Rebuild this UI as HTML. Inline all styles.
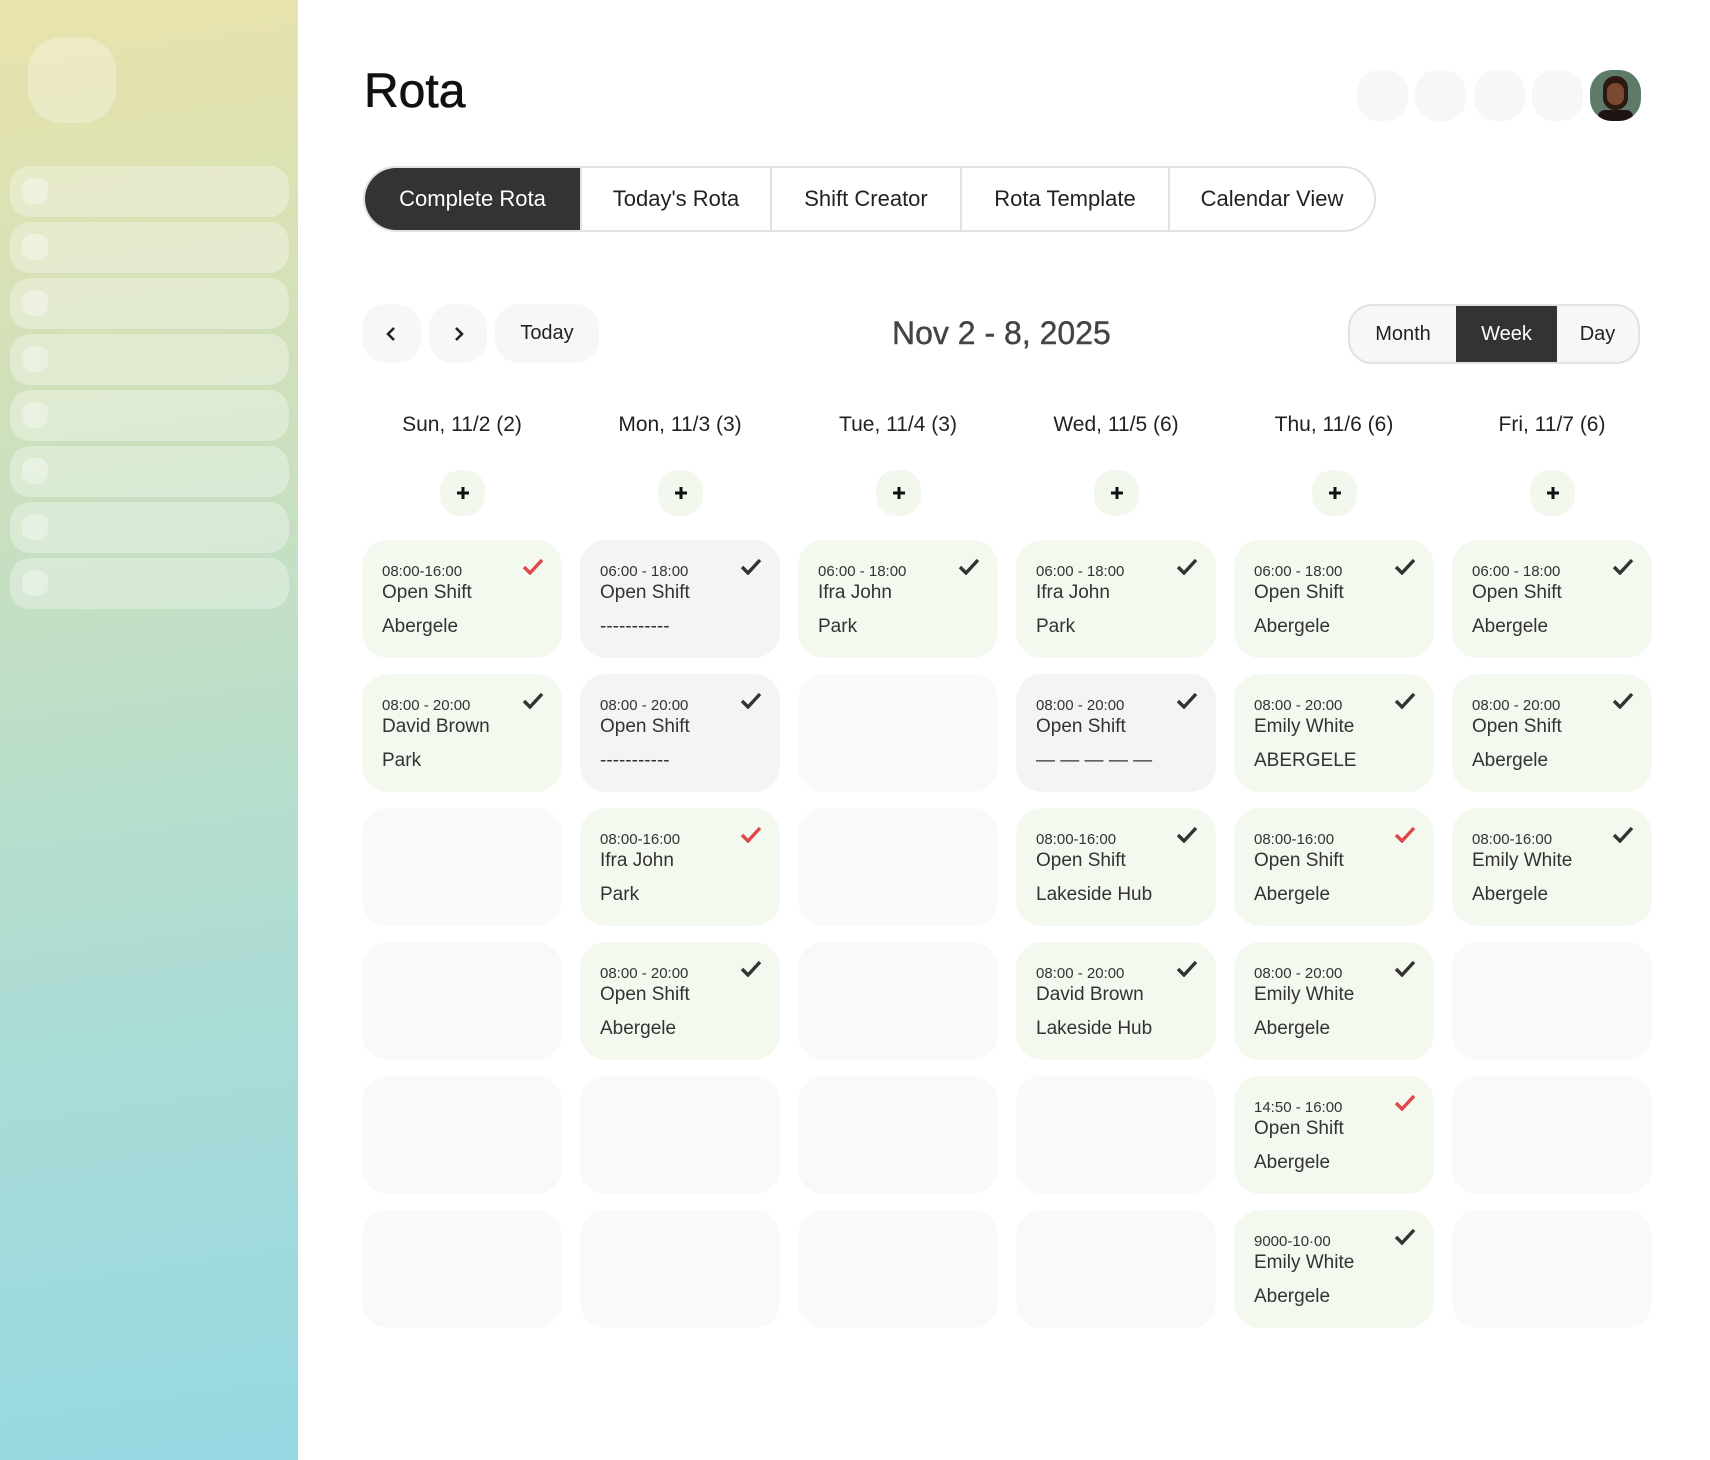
<!DOCTYPE html>
<html><head><meta charset="utf-8"><style>
*{margin:0;padding:0;box-sizing:border-box}
body{width:1710px;height:1460px;position:relative;background:#fff;font-family:"Liberation Sans",sans-serif;color:#222;overflow:hidden}
.sb{position:absolute;left:0;top:0;width:298px;height:1460px;background:linear-gradient(172deg,#e9e3ab 0%,#c4dfc3 40%,#aadcd6 70%,#95d8e2 100%)}
.logo{position:absolute;left:28px;top:37px;width:88px;height:86px;border-radius:34px;background:rgba(255,255,255,.28)}
.si{position:absolute;left:10px;width:279px;height:51px;border-radius:20px;background:rgba(255,255,255,.32)}
.si i{position:absolute;left:12px;top:12px;width:26px;height:26px;border-radius:10px;background:rgba(255,255,255,.35)}
h1{position:absolute;left:364px;top:64px;font-size:48px;font-weight:400;color:#111;-webkit-text-stroke:0.6px #111}
.tabs{position:absolute;left:363px;top:166px;height:66px;width:1013px;border:2px solid #e2e2e2;border-radius:33px;overflow:hidden;display:flex}
.tabs div{height:100%;display:flex;align-items:center;justify-content:center;font-size:22px;color:#222;border-right:2px solid #e2e2e2}
.tabs div:last-child{border-right:none}
.tabs .on{background:#333;color:#fff}
.nb{position:absolute;top:304px;height:59px;background:#f7f7f7;border-radius:24px;display:flex;align-items:center;justify-content:center;font-size:20px;color:#222}
.date{position:absolute;left:892px;top:315px;font-size:32px;color:#444;-webkit-text-stroke:0.4px #444}
.seg{position:absolute;left:1348px;top:304px;width:292px;height:60px;border:2px solid #e2e2e2;border-radius:24px;overflow:hidden;display:flex;background:#f7f7f7}
.seg div{display:flex;align-items:center;justify-content:center;font-size:20px;color:#222}
.seg .on{background:#333;color:#fff}
.av{position:absolute;top:70px;width:51px;height:51px;border-radius:22px;background:#f7f7f7}
.dh{position:absolute;top:413px;width:200px;text-align:center;font-size:21px;color:#222}
.pl{position:absolute;top:470px;width:45px;height:46px;border-radius:20px;background:#f2f8ee;display:flex;align-items:center;justify-content:center}
.c{position:absolute;width:200px;height:118px;border-radius:26px;background:#f9f9f9}
.g{background:#f3f9ef}.gr{background:#f4f4f4}
.c .t{position:absolute;left:20px;top:23px;font-size:15px;color:#333}
.c .n{position:absolute;left:20px;top:42px;font-size:19px;color:#333}
.c .l{position:absolute;left:20px;top:76px;font-size:19px;color:#333}
.c svg{position:absolute;right:18px;top:18px}
</style></head><body>
<div class="sb"><div class="logo"></div>
<div class="si" style="top:166px"><i></i></div><div class="si" style="top:222px"><i></i></div><div class="si" style="top:278px"><i></i></div><div class="si" style="top:334px"><i></i></div><div class="si" style="top:390px"><i></i></div><div class="si" style="top:446px"><i></i></div><div class="si" style="top:502px"><i></i></div><div class="si" style="top:558px"><i></i></div>
</div>
<h1>Rota</h1>
<div class="av" style="left:1357px"></div><div class="av" style="left:1415px"></div><div class="av" style="left:1474px"></div><div class="av" style="left:1532px"></div>
<div class="av" style="left:1590px;background:#5d7a6a;overflow:hidden"><div style="position:absolute;left:13px;top:6px;width:25px;height:34px;border-radius:12px;background:#2a1a12"></div><div style="position:absolute;left:17px;top:13px;width:17px;height:22px;border-radius:8px;background:#7a4a30"></div><div style="position:absolute;left:8px;top:40px;width:35px;height:14px;border-radius:10px;background:#1c1410"></div></div>
<div class="tabs"><div class="on" style="width:217px">Complete Rota</div><div style="width:190px">Today's Rota</div><div style="width:190px">Shift Creator</div><div style="width:208px">Rota Template</div><div style="flex:1">Calendar View</div></div>
<div class="nb" style="left:362px;width:59px"><svg width="14" height="16" viewBox="0 0 14 16"><path d="M9 2L3 8l6 6" fill="none" stroke="#222" stroke-width="2.6"/></svg></div>
<div class="nb" style="left:429px;width:58px"><svg width="14" height="16" viewBox="0 0 14 16"><path d="M5 2l6 6-6 6" fill="none" stroke="#222" stroke-width="2.6"/></svg></div>
<div class="nb" style="left:495px;width:104px">Today</div>
<div class="date">Nov 2 - 8, 2025</div>
<div class="seg"><div style="width:106px">Month</div><div class="on" style="width:101px">Week</div><div style="flex:1">Day</div></div>

<div class="dh" style="left:362px">Sun, 11/2 (2)</div><div class="dh" style="left:580px">Mon, 11/3 (3)</div><div class="dh" style="left:798px">Tue, 11/4 (3)</div><div class="dh" style="left:1016px">Wed, 11/5 (6)</div><div class="dh" style="left:1234px">Thu, 11/6 (6)</div><div class="dh" style="left:1452px">Fri, 11/7 (6)</div>
<div class="pl" style="left:440px"><svg width="16" height="16"><path d="M8 2v12M2 8h12" stroke="#111" stroke-width="3"/></svg></div>
<div class="pl" style="left:658px"><svg width="16" height="16"><path d="M8 2v12M2 8h12" stroke="#111" stroke-width="3"/></svg></div>
<div class="pl" style="left:876px"><svg width="16" height="16"><path d="M8 2v12M2 8h12" stroke="#111" stroke-width="3"/></svg></div>
<div class="pl" style="left:1094px"><svg width="16" height="16"><path d="M8 2v12M2 8h12" stroke="#111" stroke-width="3"/></svg></div>
<div class="pl" style="left:1312px"><svg width="16" height="16"><path d="M8 2v12M2 8h12" stroke="#111" stroke-width="3"/></svg></div>
<div class="pl" style="left:1530px"><svg width="16" height="16"><path d="M8 2v12M2 8h12" stroke="#111" stroke-width="3"/></svg></div>

<div class="c g" style="left:362px;top:540px"><div class="t">08:00-16:00</div><div class="n">Open Shift</div><div class="l">Abergele</div><svg width="22" height="17"><path d="M2 9l6 6L20 2" fill="none" stroke="#e0474c" stroke-width="3.4"/></svg></div>
<div class="c gr" style="left:580px;top:540px"><div class="t">06:00 - 18:00</div><div class="n">Open Shift</div><div class="l">-----------</div><svg width="22" height="17"><path d="M2 9l6 6L20 2" fill="none" stroke="#333" stroke-width="3.4"/></svg></div>
<div class="c g" style="left:798px;top:540px"><div class="t">06:00 - 18:00</div><div class="n">Ifra John</div><div class="l">Park</div><svg width="22" height="17"><path d="M2 9l6 6L20 2" fill="none" stroke="#333" stroke-width="3.4"/></svg></div>
<div class="c g" style="left:1016px;top:540px"><div class="t">06:00 - 18:00</div><div class="n">Ifra John</div><div class="l">Park</div><svg width="22" height="17"><path d="M2 9l6 6L20 2" fill="none" stroke="#333" stroke-width="3.4"/></svg></div>
<div class="c g" style="left:1234px;top:540px"><div class="t">06:00 - 18:00</div><div class="n">Open Shift</div><div class="l">Abergele</div><svg width="22" height="17"><path d="M2 9l6 6L20 2" fill="none" stroke="#333" stroke-width="3.4"/></svg></div>
<div class="c g" style="left:1452px;top:540px"><div class="t">06:00 - 18:00</div><div class="n">Open Shift</div><div class="l">Abergele</div><svg width="22" height="17"><path d="M2 9l6 6L20 2" fill="none" stroke="#333" stroke-width="3.4"/></svg></div>

<div class="c g" style="left:362px;top:674px"><div class="t">08:00 - 20:00</div><div class="n">David Brown</div><div class="l">Park</div><svg width="22" height="17"><path d="M2 9l6 6L20 2" fill="none" stroke="#333" stroke-width="3.4"/></svg></div>
<div class="c gr" style="left:580px;top:674px"><div class="t">08:00 - 20:00</div><div class="n">Open Shift</div><div class="l">-----------</div><svg width="22" height="17"><path d="M2 9l6 6L20 2" fill="none" stroke="#333" stroke-width="3.4"/></svg></div>
<div class="c" style="left:798px;top:674px"></div>
<div class="c gr" style="left:1016px;top:674px"><div class="t">08:00 - 20:00</div><div class="n">Open Shift</div><div class="l">— — — — —</div><svg width="22" height="17"><path d="M2 9l6 6L20 2" fill="none" stroke="#333" stroke-width="3.4"/></svg></div>
<div class="c g" style="left:1234px;top:674px"><div class="t">08:00 - 20:00</div><div class="n">Emily White</div><div class="l">ABERGELE</div><svg width="22" height="17"><path d="M2 9l6 6L20 2" fill="none" stroke="#333" stroke-width="3.4"/></svg></div>
<div class="c g" style="left:1452px;top:674px"><div class="t">08:00 - 20:00</div><div class="n">Open Shift</div><div class="l">Abergele</div><svg width="22" height="17"><path d="M2 9l6 6L20 2" fill="none" stroke="#333" stroke-width="3.4"/></svg></div>

<div class="c" style="left:362px;top:808px"></div>
<div class="c g" style="left:580px;top:808px"><div class="t">08:00-16:00</div><div class="n">Ifra John</div><div class="l">Park</div><svg width="22" height="17"><path d="M2 9l6 6L20 2" fill="none" stroke="#e0474c" stroke-width="3.4"/></svg></div>
<div class="c" style="left:798px;top:808px"></div>
<div class="c g" style="left:1016px;top:808px"><div class="t">08:00-16:00</div><div class="n">Open Shift</div><div class="l">Lakeside Hub</div><svg width="22" height="17"><path d="M2 9l6 6L20 2" fill="none" stroke="#333" stroke-width="3.4"/></svg></div>
<div class="c g" style="left:1234px;top:808px"><div class="t">08:00-16:00</div><div class="n">Open Shift</div><div class="l">Abergele</div><svg width="22" height="17"><path d="M2 9l6 6L20 2" fill="none" stroke="#e0474c" stroke-width="3.4"/></svg></div>
<div class="c g" style="left:1452px;top:808px"><div class="t">08:00-16:00</div><div class="n">Emily White</div><div class="l">Abergele</div><svg width="22" height="17"><path d="M2 9l6 6L20 2" fill="none" stroke="#333" stroke-width="3.4"/></svg></div>

<div class="c" style="left:362px;top:942px"></div>
<div class="c g" style="left:580px;top:942px"><div class="t">08:00 - 20:00</div><div class="n">Open Shift</div><div class="l">Abergele</div><svg width="22" height="17"><path d="M2 9l6 6L20 2" fill="none" stroke="#333" stroke-width="3.4"/></svg></div>
<div class="c" style="left:798px;top:942px"></div>
<div class="c g" style="left:1016px;top:942px"><div class="t">08:00 - 20:00</div><div class="n">David Brown</div><div class="l">Lakeside Hub</div><svg width="22" height="17"><path d="M2 9l6 6L20 2" fill="none" stroke="#333" stroke-width="3.4"/></svg></div>
<div class="c g" style="left:1234px;top:942px"><div class="t">08:00 - 20:00</div><div class="n">Emily White</div><div class="l">Abergele</div><svg width="22" height="17"><path d="M2 9l6 6L20 2" fill="none" stroke="#333" stroke-width="3.4"/></svg></div>
<div class="c" style="left:1452px;top:942px"></div>

<div class="c" style="left:362px;top:1076px"></div><div class="c" style="left:580px;top:1076px"></div><div class="c" style="left:798px;top:1076px"></div><div class="c" style="left:1016px;top:1076px"></div>
<div class="c g" style="left:1234px;top:1076px"><div class="t">14:50 - 16:00</div><div class="n">Open Shift</div><div class="l">Abergele</div><svg width="22" height="17"><path d="M2 9l6 6L20 2" fill="none" stroke="#e0474c" stroke-width="3.4"/></svg></div>
<div class="c" style="left:1452px;top:1076px"></div>

<div class="c" style="left:362px;top:1210px"></div><div class="c" style="left:580px;top:1210px"></div><div class="c" style="left:798px;top:1210px"></div><div class="c" style="left:1016px;top:1210px"></div>
<div class="c g" style="left:1234px;top:1210px"><div class="t">9000-10·00</div><div class="n">Emily White</div><div class="l">Abergele</div><svg width="22" height="17"><path d="M2 9l6 6L20 2" fill="none" stroke="#333" stroke-width="3.4"/></svg></div>
<div class="c" style="left:1452px;top:1210px"></div>
</body></html>
